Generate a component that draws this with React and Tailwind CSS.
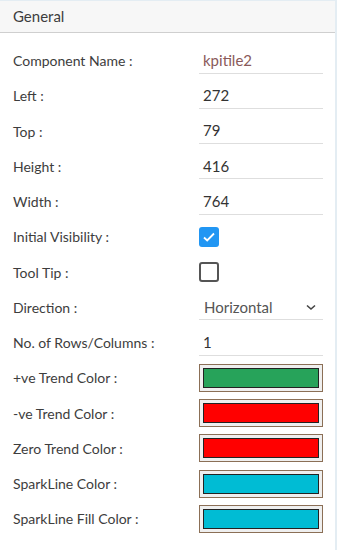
import React from "react";

const font = { fontFamily: "Lato, 'Open Sans', sans-serif" };

const TextRow = ({ label, value, muted }) => (
  <div className="flex items-center h-[35.25px]">
    <label className="w-[186px] text-[14px] text-[#3d3d3d]">{label}</label>
    <div className="w-[124px] h-[26px] flex items-center border-b border-[#dedede] px-1">
      <span className={`text-[15px] ${muted ? "text-[#8a5a5a]" : "text-[#333]"}`}>
        {value}
      </span>
    </div>
  </div>
);

const CheckRow = ({ label, checked }) => (
  <div className="flex items-center h-[35.25px]">
    <label className="w-[186px] text-[14px] text-[#3d3d3d]">{label}</label>
    {checked ? (
      <div className="w-[20px] h-[20px] rounded-[3px] bg-[#2196f3] flex items-center justify-center">
        <svg width="14" height="14" viewBox="0 0 14 14">
          <path d="M2 7.5l3.2 3L12 3.5" fill="none" stroke="white" strokeWidth="1.8" />
        </svg>
      </div>
    ) : (
      <div className="w-[20px] h-[20px] rounded-[3px] border-2 border-[#555]" />
    )}
  </div>
);

const ColorRow = ({ label, color }) => (
  <div className="flex items-center h-[35.25px]">
    <label className="w-[186px] text-[14px] text-[#3d3d3d]">{label}</label>
    <div className="w-[124px] h-[28px] border border-[#8b6f56] bg-[#efefef] p-[3px]">
      <div className="w-full h-full border border-[#222]" style={{ backgroundColor: color }} />
    </div>
  </div>
);

export default function App() {
  return (
    <div className="w-[337px] h-[550px] bg-white border-r-2 border-[#e4edf3]" style={font}>
      <div className="h-[33px] bg-[#f7f7f7] border-t border-[#e4edf3] border-b border-b-[#cfcfcf] flex items-center px-[13px]">
        <span className="text-[15px] text-[#3d3d3d]">General</span>
      </div>
      <div className="pl-[13px] pt-[10px]">
        <TextRow label="Component Name :" value="kpitile2" muted />
        <TextRow label="Left :" value="272" />
        <TextRow label="Top :" value="79" />
        <TextRow label="Height :" value="416" />
        <TextRow label="Width :" value="764" />
        <CheckRow label="Initial Visibility :" checked />
        <CheckRow label="Tool Tip :" />
        <div className="flex items-center h-[35.25px]">
          <label className="w-[186px] text-[14px] text-[#3d3d3d]">Direction :</label>
          <div className="w-[124px] h-[26px] flex items-center justify-between border-b border-[#dedede] pl-[5px] pr-[6px]">
            <span className="text-[15px] text-[#555]">Horizontal</span>
            <svg width="12" height="12" viewBox="0 0 12 12">
              <path d="M2 4.5l4 3.5 4-3.5" fill="none" stroke="#444" strokeWidth="1.6" />
            </svg>
          </div>
        </div>
        <TextRow label="No. of Rows/Columns :" value="1" />
        <ColorRow label="+ve Trend Color :" color="#27a35a" />
        <ColorRow label="-ve Trend Color :" color="#ff0000" />
        <ColorRow label="Zero Trend Color :" color="#ff0000" />
        <ColorRow label="SparkLine Color :" color="#00bcd4" />
        <ColorRow label="SparkLine Fill Color :" color="#00bcd4" />
      </div>
    </div>
  );
}
